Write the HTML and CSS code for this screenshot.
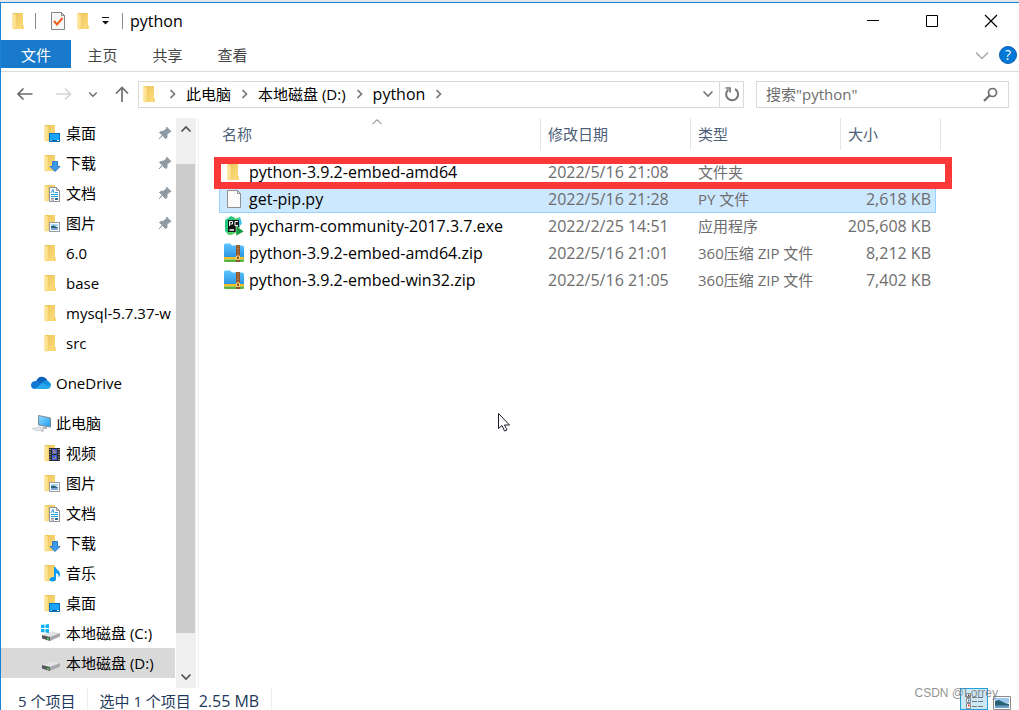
FILE: index.html
```
<!DOCTYPE html>
<html lang="zh-CN">
<head>
  <meta charset="UTF-8" />
  <meta name="viewport" content="width=device-width, initial-scale=1.0" />
  <title>python</title>
  <link rel="stylesheet" href="styles.css">
</head>
<body>
  <!-- icon set -->
  <svg class="defs" aria-hidden="true">
    <defs>
      <linearGradient id="g-front" x1="0" x2="1"><stop offset="0" stop-color="#ffeaa9" /><stop offset="1" stop-color="#fbdc86" /></linearGradient>
      <linearGradient id="g-back" x1="0" x2="1" y2="1"><stop offset="0" stop-color="#ebc45c" /><stop offset="1" stop-color="#ffdf80" /></linearGradient>
      <linearGradient id="g-zip" x2="0" y2="1"><stop offset="0" stop-color="#5cc4ff" /><stop offset="1" stop-color="#2b93e0" /></linearGradient>
      <linearGradient id="g-screen" x1="0" x2="1" y2="1"><stop offset="0" stop-color="#8fdcff" /><stop offset="1" stop-color="#1c9cf0" /></linearGradient>
    </defs>
    <symbol id="folder" viewBox="0 0 20 18">
      <path d="M4 1h10v12l1 1v3H6z" fill="url(#g-back)" />
      <path d="M3 1l4 2v11l-1 4-3-1.500z" fill="url(#g-front)" />
      <path d="M13.500 13v4" stroke="#f1cb69" />
    </symbol>
    <symbol id="desktop" viewBox="0 0 20 18">
      <use href="#folder" />
      <rect x="8.500" y="9.500" width="10" height="8" fill="#18a4ff" stroke="#0871bd" />
      <path d="M9 16.500h9" stroke="#0b5f9e" /><path d="M9.500 16.500h1M16 16.500h2" stroke="#fff" />
    </symbol>
    <symbol id="download" viewBox="0 0 20 18">
      <use href="#folder" />
      <path d="M11.500 7.500h5v5h2.500L14 17.500 9 12.500h2.500z" fill="#3d9ae8" stroke="#2a7ccb" />
    </symbol>
    <symbol id="document" viewBox="0 0 20 18">
      <use href="#folder" />
      <path d="M8.500 3.500h7l3 3v11h-10z" fill="#fff" stroke="#8b929a" />
      <path d="M15.500 3.500v3h3" fill="none" stroke="#8b929a" />
      <path d="M10 9l2-3.500 1 3.500M14 8.500h3M10 10.500h7M10 12.500h7" fill="none" stroke="#1f9adb" />
      <path d="M10 14.500h3M10 16h3" stroke="#888" /><path d="M14 14h3v2h-3z" fill="#2e6d87" />
    </symbol>
    <symbol id="picture" viewBox="0 0 20 18">
      <use href="#folder" />
      <rect x="8.500" y="8.500" width="10" height="9" fill="#fff" stroke="#979ba1" />
      <path d="M10 10h7v2h-7z" fill="#a9d8fa" /><path d="M10 12l3-.5 4 2v1h-7z" fill="#2d6478" /><path d="M10 14.500h7v1.500h-7z" fill="#6fa3d9" />
    </symbol>
    <symbol id="video" viewBox="0 0 20 18">
      <use href="#folder" />
      <path d="M8 4h11v13H8z" fill="#29292e" />
      <path d="M9 5v12M18 5v12" stroke="#ddd" stroke-dasharray="1 1.500" />
      <path d="M11 5h5v5h-5z" fill="#4a64d2" /><path d="M12 6l3 3M12 9l2-2" stroke="#e6a24a" />
      <path d="M11 11h5v5h-5z" fill="#3b62d6" /><path d="M12 15l3-2" stroke="#d9a05c" />
    </symbol>
    <symbol id="music" viewBox="0 0 20 18">
      <use href="#folder" />
      <path d="M13 3h1.500c.5 3 4.500 3.500 4.500 7 0 1.500-.5 2.500-1.500 3.500.5-3-1-4-2.500-4.500v6c0 1.500-1.500 2.500-3.500 2.500S8.500 16.500 8.500 15.500 10 13 11.500 13H13z" fill="#0a9af5" />
    </symbol>
    <symbol id="onedrive" viewBox="0 0 20 18">
      <path d="M5 8C6 4 9 2 12 3c2 .3 4 2 4.500 4l-5 3z" fill="#0a62b8" />
      <path d="M0 11c0-3 3-4.500 5.500-4l6.500 3-8 5C1.500 15 0 13.500 0 11z" fill="#0f78d4" />
      <path d="M11 9c2-2.500 5-3 7-1 3 1.500 2.500 6.500-1.500 7H4z" fill="#28a8ea" />
      <path d="M11 9l3-2c1.500-.6 3-.2 4 1l2 3-3 1z" fill="#1490df" />
    </symbol>
    <symbol id="pc" viewBox="0 0 20 18">
      <path d="M7.500 1.500l12 2.500v9l-12-2z" fill="url(#g-screen)" stroke="#7b8b96" />
      <path d="M12 12.500v2l4 .5v-2z" fill="#a7b0b6" />
      <path d="M1 14.500l8-1.500 4 2-7 2z" fill="#e3e6e8" stroke="#b9bec2" stroke-width=".6" />
      <path d="M9 17l3-1.200 2 1L11 18z" fill="#c3c8cb" />
    </symbol>
    <symbol id="drive" viewBox="0 0 20 18">
      <path d="M1 11l9-3.500 9 1.500-10 4z" fill="#e1e3e6" />
      <path d="M1 11l8 2v4l-8-2.500z" fill="#55585a" />
      <path d="M9 13l10-4v3.500L9 17z" fill="#a6a8ab" />
      <path d="M6 14.500l2 .5" stroke="#4fd45a" stroke-width="1.500" />
    </symbol>
    <symbol id="windrive" viewBox="0 0 20 18">
      <use href="#drive" />
      <path d="M0 1l3.500-.4V4H0zM4.500.5L8 0v4H4.500zM0 5h3.500v3.500L0 8zM4.500 5H8v4l-3.500-.5z" fill="#10b3f0" />
    </symbol>
    <symbol id="pin" viewBox="0 0 14 14">
      <path d="M8.500 1L13 5.500l-1.500.5-2.500 2.500v3L7.500 12.500l-3-3L1 13l3.500-4L1.500 6.500 3 5.500l3-.5L8.500 2.500z" fill="#8e9aa3" stroke="#8e9aa3" />
    </symbol>
    <symbol id="file" viewBox="0 0 20 20">
      <path d="M3.500 1.500h10l3 3v14h-13z" fill="#fbfbfb" stroke="#8f8f8f" />
      <path d="M13.500 1.500v3h3" fill="none" stroke="#8f8f8f" />
    </symbol>
    <symbol id="pycharm" viewBox="0 0 20 20">
      <path d="M1 4l6-4 4 2-2 16-4 1-4-4z" fill="#22c97d" />
      <path d="M10 3l6-2 1 6-3 9-7 3-4-1z" fill="#52cf63" />
      <path d="M14 4l2-3 2 6-3 4z" fill="#3cc5e2" />
      <path d="M4 4h11v12H4z" fill="#111" />
      <path d="M5.500 10V5.500h3v2.500h-3M14 5.500h-3v4h3" fill="none" stroke="#fff" />
      <path d="M5.500 14h4.500" stroke="#fff" stroke-width="1.500" />
      <path d="M12 9.500l8 6-8 4.500z" fill="#17993f" stroke="#fff" stroke-width=".5" />
    </symbol>
    <symbol id="zip" viewBox="0 0 20 20">
      <path d="M0 2q0-1.500 1.500-1.500H6l2 2h10q2 0 2 2V15H0z" fill="url(#g-zip)" />
      <path d="M0 14h20v2.500H0z" fill="#f5bf27" />
      <path d="M0 16.500h20V18q0 1-1.500 1h-17Q0 19 0 18z" fill="#55b43d" />
      <path d="M12 2h4v17h-4z" fill="#8f542e" />
      <path d="M14 3v9" stroke="#b5793f" stroke-dasharray="1 1" stroke-width="2" />
      <path d="M12.500 13h3v3.500h-3z" fill="#8f542e" stroke="#ffd878" />
    </symbol>
    <symbol id="chev-right" viewBox="0 0 8 10"><path d="M1.500 1l4 4-4 4" fill="none" stroke="currentColor" stroke-width="1.700" /></symbol>
    <symbol id="chev-down" viewBox="0 0 12 8"><path d="M1.500 1.500L6 6l4.500-4.500" fill="none" stroke="currentColor" stroke-width="1.700" /></symbol>
  </svg>

  <div class="window">
    <header class="titlebar">
      <svg class="icon"><use href="#folder" /></svg>
      <span class="divider"></span>
      <button class="qat" aria-label="属性">
        <svg width="16" height="20" viewBox="0 0 16 20"><path d="M1.500 1.500h10l3 3v14h-13z" fill="#f7f7f7" stroke="#858585" /><path d="M11.500 1.500v3h3" fill="none" stroke="#858585" /><path d="M4 10l3 3.500 5.500-6.500" fill="none" stroke="#ee5a1c" stroke-width="2" /></svg>
      </button>
      <button class="qat" aria-label="新建文件夹"><svg class="icon"><use href="#folder" /></svg></button>
      <button class="qat qat-more" aria-label="自定义快速访问工具栏">
        <svg width="9" height="8" viewBox="0 0 9 8"><path d="M1 .5h7" stroke="#111" /><path d="M1 4h7L4.500 7.500z" fill="#111" /></svg>
      </button>
      <span class="divider"></span>
      <h1 class="title latin">python</h1>
      <div class="caption">
        <button aria-label="最小化"><svg width="14" height="14"><path d="M1 6.500h12" stroke="#000" /></svg></button>
        <button aria-label="最大化"><svg width="14" height="14"><path d="M1.500 1.500h11v11h-11z" fill="none" stroke="#000" /></svg></button>
        <button aria-label="关闭"><svg width="14" height="14"><path d="M1 1l12 12M13 1L1 13" stroke="#000" stroke-width="1.200" /></svg></button>
      </div>
    </header>

    <nav class="tabs">
      <button class="tab tab-file">文件</button>
      <button class="tab">主页</button>
      <button class="tab">共享</button>
      <button class="tab">查看</button>
      <div class="tabs-end">
        <button aria-label="展开功能区"><svg width="14" height="9"><path d="M1 1.500l6 6 6-6" fill="none" stroke="#a8a8a8" stroke-width="1.400" /></svg></button>
        <button class="help" aria-label="帮助">?</button>
      </div>
    </nav>

    <div class="navbar">
      <div class="arrows">
        <button class="back" aria-label="后退"><svg width="16" height="14"><path d="M6.500 1.500L1 7l5.500 5.500M1 7h14.500" fill="none" stroke="#6e6e6e" stroke-width="1.700" /></svg></button>
        <button aria-label="前进"><svg width="16" height="14"><path d="M9 1.500L14.500 7 9 12.500M14.500 7H0" fill="none" stroke="#d6d6d6" stroke-width="1.700" /></svg></button>
        <button aria-label="最近浏览的位置"><svg width="10" height="7" viewBox="0 0 12 8"><use href="#chev-down" /></svg></button>
        <button aria-label="上移"><svg width="16" height="16"><path d="M2 7.500L8 1.500l6 6M8 1.500V16" fill="none" stroke="#6e6e6e" stroke-width="1.700" /></svg></button>
      </div>
      <div class="address">
        <svg class="icon"><use href="#folder" /></svg>
        <svg class="sep"><use href="#chev-right" /></svg>
        <button class="crumb">此电脑</button>
        <svg class="sep"><use href="#chev-right" /></svg>
        <button class="crumb">本地磁盘 (D:)</button>
        <svg class="sep"><use href="#chev-right" /></svg>
        <button class="crumb latin">python</button>
        <svg class="sep"><use href="#chev-right" /></svg>
        <button class="history" aria-label="上一个位置"><svg width="12" height="8"><use href="#chev-down" /></svg></button>
        <button class="refresh" aria-label="刷新"><svg width="16" height="16"><path d="M4.500 3.500A6 6 0 1 0 11 3" fill="none" stroke="#777" stroke-width="2" /><path d="M1.500 2h4.500v4.500" fill="none" stroke="#777" stroke-width="1.700" /></svg></button>
      </div>
      <label class="search">
        <input type="text" aria-label="搜索" placeholder="搜索&quot;python&quot;">
        <svg width="15" height="15"><circle cx="9.500" cy="5.500" r="4" fill="none" stroke="#6e6e6e" stroke-width="1.700" /><path d="M6.500 8.500L1 14" stroke="#6e6e6e" stroke-width="2.200" /></svg>
      </label>
    </div>

    <main class="content">
      <aside class="sidebar">
        <ul class="tree">
          <li><svg class="icon"><use href="#desktop" /></svg>桌面<svg class="pin"><use href="#pin" /></svg></li>
          <li><svg class="icon"><use href="#download" /></svg>下载<svg class="pin"><use href="#pin" /></svg></li>
          <li><svg class="icon"><use href="#document" /></svg>文档<svg class="pin"><use href="#pin" /></svg></li>
          <li><svg class="icon"><use href="#picture" /></svg>图片<svg class="pin"><use href="#pin" /></svg></li>
          <li><svg class="icon"><use href="#folder" /></svg>6.0</li>
          <li><svg class="icon"><use href="#folder" /></svg>base</li>
          <li><svg class="icon"><use href="#folder" /></svg>mysql-5.7.37-w</li>
          <li><svg class="icon"><use href="#folder" /></svg>src</li>
          <li class="root"><svg class="icon"><use href="#onedrive" /></svg>OneDrive</li>
          <li class="root"><svg class="icon"><use href="#pc" /></svg>此电脑</li>
          <li><svg class="icon"><use href="#video" /></svg>视频</li>
          <li><svg class="icon"><use href="#picture" /></svg>图片</li>
          <li><svg class="icon"><use href="#document" /></svg>文档</li>
          <li><svg class="icon"><use href="#download" /></svg>下载</li>
          <li><svg class="icon"><use href="#music" /></svg>音乐</li>
          <li><svg class="icon"><use href="#desktop" /></svg>桌面</li>
          <li><svg class="icon"><use href="#windrive" /></svg>本地磁盘 (C:)</li>
          <li class="current"><svg class="icon"><use href="#drive" /></svg>本地磁盘 (D:)</li>
        </ul>
        <div class="scrollbar">
          <button class="scroll-up" aria-label="向上滚动"><svg width="12" height="8"><use href="#chev-down" /></svg></button>
          <div class="thumb"></div>
          <button class="scroll-down" aria-label="向下滚动"><svg width="12" height="8"><use href="#chev-down" /></svg></button>
        </div>
      </aside>

      <section class="files">
        <table>
          <colgroup><col class="col-name"><col class="col-date"><col class="col-type"><col class="col-size"><col class="col-end"></colgroup>
          <thead>
            <tr>
              <th>名称<svg class="sort" width="10" height="6"><path d="M.5 5L5 .7 9.500 5" fill="none" stroke="#666" /></svg></th>
              <th>修改日期</th>
              <th>类型</th>
              <th colspan="2">大小</th>
            </tr>
          </thead>
          <tbody>
            <tr>
              <td><div class="name"><svg class="icon"><use href="#folder" /></svg>python-3.9.2-embed-amd64</div></td>
              <td class="latin">2022/5/16 21:08</td><td>文件夹</td><td></td>
            </tr>
            <tr class="selected">
              <td><div class="name"><svg class="icon-file"><use href="#file" /></svg>get-pip.py</div></td>
              <td class="latin">2022/5/16 21:28</td><td>PY 文件</td><td>2,618 KB</td>
            </tr>
            <tr>
              <td><div class="name"><svg class="icon-file"><use href="#pycharm" /></svg>pycharm-community-2017.3.7.exe</div></td>
              <td class="latin">2022/2/25 14:51</td><td>应用程序</td><td>205,608 KB</td>
            </tr>
            <tr>
              <td><div class="name"><svg class="icon-file"><use href="#zip" /></svg>python-3.9.2-embed-amd64.zip</div></td>
              <td class="latin">2022/5/16 21:01</td><td>360压缩 ZIP 文件</td><td>8,212 KB</td>
            </tr>
            <tr>
              <td><div class="name"><svg class="icon-file"><use href="#zip" /></svg>python-3.9.2-embed-win32.zip</div></td>
              <td class="latin">2022/5/16 21:05</td><td>360压缩 ZIP 文件</td><td>7,402 KB</td>
            </tr>
          </tbody>
        </table>
        <div class="highlight"></div>
      </section>
    </main>

    <footer class="statusbar">
      <span class="status">5 个项目</span>
      <span class="status">选中 1 个项目&nbsp; <span class="latin">2.55 MB</span></span>
      <div class="views">
        <button class="view active" aria-label="详细信息">
          <svg width="20" height="18"><path d="M2.500 1.500h4v4h-4zM2.500 6.500h4v4h-4zM2.500 11.500h4v5h-4z" fill="#fff" stroke="#8a8a8a" /><path d="M4 3.500h1.500" stroke="#444" stroke-width="2" /><path d="M4 8.500h1.500" stroke="#3f76b5" stroke-width="2" /><path d="M4 13.500h1.500" stroke="#d33" stroke-width="2" /><path d="M8 5.500h5M14 5.500h5M8 9.500h5M14 9.500h5M8 14.500h5M14 14.500h5" stroke="#777" /></svg>
        </button>
        <button class="view" aria-label="大图标">
          <svg width="18" height="14"><path d="M.5.5h17v13H.5z" fill="#fff" stroke="#8a8a8a" /><path d="M2 2h14v5H2z" fill="#9cc9f0" /><path d="M2 5l4-1 6 3 4 1v2H2z" fill="#2a6170" /><path d="M2 9.500h14V12H2z" fill="#6d9cc9" /></svg>
        </button>
      </div>
      <span class="watermark">CSDN @Lorrey</span>
    </footer>

    <svg class="cursor" width="14" height="21"><path d="M1.500 1.500v15l3.500-3 2.500 5.500 2.500-1-2.500-5h5z" fill="#fff" stroke="#1b1b2b" /></svg>
  </div>
</body>
</html>
```

FILE: styles.css
```
* {
  box-sizing: border-box;
}

body {
  margin: 0;
  background: #fff;
  color: #000;
  font-family: "Open Sans", "Noto Sans CJK SC", sans-serif;
  font-size: 15px;
  line-height: 20px;
}

button,
input {
  font: inherit;
  color: inherit;
  border: none;
  background: none;
  padding: 0;
}

svg {
  display: block;
  flex: none;
}

.defs {
  position: absolute;
  width: 0;
  height: 0;
}

.icon {
  width: 20px;
  height: 18px;
}

.icon-file {
  width: 20px;
  height: 20px;
}

.latin {
  font-size: 16px;
}

.window {
  position: relative;
  display: flex;
  flex-direction: column;
  height: 100vh;
  overflow: hidden;
  border-top: 2px solid #e4e7ea;
}

.window::before {
  content: "";
  position: absolute;
  inset: 0;
  border-top: 1px solid #1883d7;
  border-left: 1px solid #1883d7;
  pointer-events: none;
  z-index: 1;
}

/* title bar */
.titlebar {
  display: flex;
  align-items: center;
  height: 38px;
  padding-left: 9px;
}

.divider {
  width: 1px;
  height: 16px;
  margin: 0 6px;
  background: #8a8a8a;
}

.qat {
  margin-left: 8px;
}

.qat + .qat-more {
  margin: 0 6px 0 7px;
}

.title {
  margin: 0 0 0 1px;
  font-weight: 400;
}

.caption {
  display: flex;
  gap: 45px;
  margin-left: auto;
  padding-right: 21px;
}

/* ribbon tabs */
.tabs {
  display: flex;
  align-items: flex-start;
  height: 32px;
  padding-left: 1px;
  border-bottom: 1px solid #dadbdc;
}

.tab {
  width: 65px;
  height: 28px;
  padding: 1px 2px 0 0;
  color: #444;
}

.tab-file {
  width: 70px;
  padding-right: 0;
  background: #1979ca;
  color: #fff;
}

.tabs-end {
  display: flex;
  align-items: center;
  gap: 10px;
  height: 30px;
  margin-left: auto;
  padding-right: 2px;
}

.help {
  width: 18px;
  height: 18px;
  border: 1px solid #0a5cb0;
  border-radius: 50%;
  background: #0078d7;
  color: #fff;
  font-size: 14px;
  line-height: 16px;
}

/* navigation bar */
.navbar {
  display: flex;
  align-items: center;
  height: 46px;
  padding: 0 10px 2px 17px;
}

.arrows {
  display: flex;
  align-items: center;
  width: 121px;
  gap: 16px;
}

.arrows button {
  color: #6e6e6e;
}

.arrows .back {
  margin-right: 7px;
}

.address {
  display: flex;
  flex: 1;
  align-items: center;
  height: 27px;
  padding-left: 1px;
  border: 1px solid #d9d9d9;
}

.sep {
  width: 8px;
  height: 10px;
  margin: 0 9px 0 10px;
  color: #777;
}

.icon + .sep {
  margin-left: 9px;
}

.crumb {
  padding-bottom: 1px;
}

.history {
  margin-left: auto;
  padding: 0 5px;
  color: #777;
}

.refresh {
  display: flex;
  align-items: center;
  justify-content: center;
  width: 24px;
  height: 25px;
  border-left: 1px solid #d9d9d9;
}

.search {
  display: flex;
  align-items: center;
  width: 253px;
  height: 27px;
  margin-left: 12px;
  padding: 0 10px 0 9px;
  border: 1px solid #d9d9d9;
}

.search input {
  flex: 1;
  min-width: 0;
  outline: none;
}

.search input::placeholder {
  color: #6d6d6d;
}

/* content */
.content {
  display: flex;
  flex: 1;
  min-height: 0;
}

.sidebar {
  display: flex;
  width: 199px;
  padding-left: 1px;
  border-right: 1px solid #f0f0f0;
}

.tree {
  flex: 1;
  min-width: 0;
  margin: 0 1px 0 0;
  padding: 0;
  list-style: none;
}

.tree li {
  display: flex;
  align-items: center;
  gap: 5px;
  height: 30px;
  padding-left: 40px;
  overflow: hidden;
  white-space: nowrap;
}

.tree .root {
  margin-top: 10px;
  padding-left: 30px;
}

.tree .current {
  background: #d9d9d9;
}

.pin {
  width: 14px;
  height: 14px;
  margin: 0 3px 0 auto;
}

.scrollbar {
  display: flex;
  flex-direction: column;
  width: 20px;
  margin-right: 2px;
  background: #f0f0f0;
}

.scrollbar button {
  display: flex;
  align-items: center;
  justify-content: center;
  height: 22px;
  color: #505050;
}

.scroll-up svg {
  transform: rotate(180deg);
}

.thumb {
  flex: 1;
  width: 19px;
  margin: 24px 0 33px;
  background: #cdcdcd;
}

.files {
  position: relative;
  flex: 1;
  padding-left: 20px;
}

table {
  width: 722px;
  table-layout: fixed;
  border-collapse: separate;
  border-spacing: 0;
}

.col-name {
  width: 322px;
}

.col-date,
.col-type {
  width: 150px;
}

.col-size {
  width: 95px;
}

.col-end {
  width: 5px;
}

th {
  position: relative;
  height: 32px;
  padding: 0 7px;
  border-right: 1px solid #e5e5e5;
  color: #4c607a;
  font-weight: 400;
  text-align: left;
}

th:first-child {
  padding-left: 3px;
}

.sort {
  position: absolute;
  top: 1px;
  left: 153px;
}

tbody::before {
  content: "";
  display: block;
  height: 9px;
}

td {
  height: 27px;
  padding: 0 7px 2px;
  color: #6d6d6d;
  white-space: nowrap;
}

td:first-child {
  padding: 0 5px 2px;
  color: #000;
  font-size: 16px;
}

td:nth-child(4) {
  padding: 0 5px 2px;
  font-size: 16px;
  text-align: right;
}

.name {
  display: flex;
  align-items: center;
  gap: 5px;
}

.selected td {
  background: #cce8ff;
  box-shadow: inset 0 -1px #99d1ff;
}

.selected td:first-child {
  box-shadow: inset 1px -1px #99d1ff;
}

.selected td:nth-child(4) {
  box-shadow: inset -1px -1px #99d1ff;
}

/* red frame drawn over the first row */
.highlight {
  position: absolute;
  top: 39px;
  left: 15px;
  width: 738px;
  height: 32px;
  border: 7px solid #fb3838;
}

/* status bar */
.statusbar {
  position: relative;
  display: flex;
  height: 22px;
  padding-left: 18px;
  color: #1e395b;
  line-height: 16px;
  white-space: nowrap;
}

.status {
  padding: 5px 12px 0 0;
  margin-right: 11px;
  border-right: 1px solid #eee;
}

.views {
  display: flex;
  gap: 5px;
  margin-left: auto;
  padding-right: 8px;
}

.view {
  display: flex;
  padding-top: 8px;
}

.view.active {
  width: 28px;
  padding: 3px;
  border: 1px solid #26a0da;
  background: #cbe8f6;
}

.watermark {
  position: absolute;
  right: 21px;
  top: -3px;
  color: rgba(110, 110, 110, 0.75);
  font-family: "Liberation Sans", sans-serif;
  font-size: 12px;
}

.cursor {
  position: absolute;
  left: 497px;
  top: 410px;
}
```
